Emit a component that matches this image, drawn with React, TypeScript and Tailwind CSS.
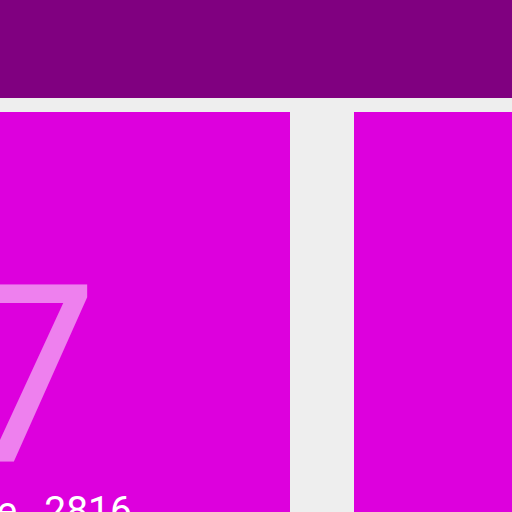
export default function App() {
  return (
    <div className="w-[512px] h-[512px] overflow-hidden bg-[#eeeeee] flex flex-col" style={{ fontFamily: "Roboto, sans-serif" }}>
      <div className="h-[98px] shrink-0 bg-[#800080]" />
      <div className="flex gap-[64px] pt-[14px] flex-1 min-h-0">
        <div className="w-[290px] shrink-0 bg-[#dd00dd] overflow-hidden flex flex-col">
          <div className="ml-[-42px] mt-[141px] flex flex-col whitespace-nowrap" style={{ fontFamily: "Roboto, sans-serif" }}>
            <span className="text-[249px] leading-none text-white/50">7</span>
            <div className="flex gap-[27px] ml-[-26px] mt-[-10px] text-[39px] leading-none text-white">
              <span>June</span>
              <span>2816</span>
            </div>
          </div>
        </div>
        <div className="flex-1 bg-[#dd00dd]" />
      </div>
    </div>
  );
}
